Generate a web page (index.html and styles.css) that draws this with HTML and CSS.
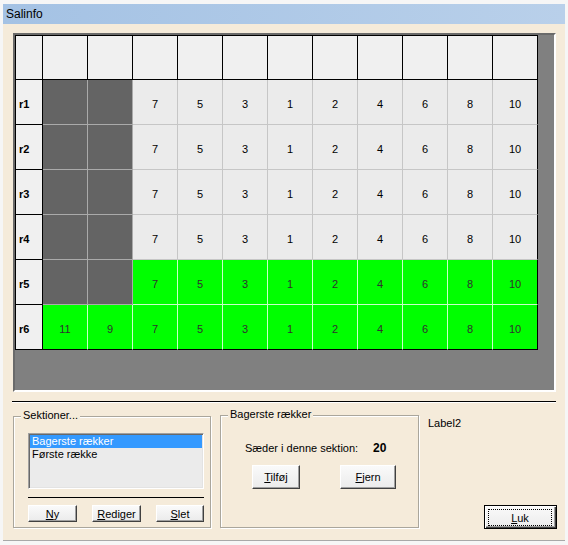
FILE: index.html
```html
<!DOCTYPE html>
<html lang="da">
<head>
<meta charset="utf-8">
<title>Salinfo</title>
<link rel="stylesheet" href="styles.css">
</head>
<body>
<div class="window">
  <div class="titlebar">Salinfo</div>
  <div class="client">
    <div class="panel">
      <div class="grid">
        <div class="c fx"></div><div class="c fx"></div><div class="c fx"></div><div class="c fx"></div><div class="c fx"></div><div class="c fx"></div><div class="c fx"></div><div class="c fx"></div><div class="c fx"></div><div class="c fx"></div><div class="c fx"></div><div class="c fx"></div>

        <div class="c fx rl">r1</div><div class="c dk"></div><div class="c dk"></div><div class="c lt">7</div><div class="c lt">5</div><div class="c lt">3</div><div class="c lt">1</div><div class="c lt">2</div><div class="c lt">4</div><div class="c lt">6</div><div class="c lt">8</div><div class="c lt er">10</div>

        <div class="c fx rl">r2</div><div class="c dk"></div><div class="c dk"></div><div class="c lt">7</div><div class="c lt">5</div><div class="c lt">3</div><div class="c lt">1</div><div class="c lt">2</div><div class="c lt">4</div><div class="c lt">6</div><div class="c lt">8</div><div class="c lt er">10</div>

        <div class="c fx rl">r3</div><div class="c dk"></div><div class="c dk"></div><div class="c lt">7</div><div class="c lt">5</div><div class="c lt">3</div><div class="c lt">1</div><div class="c lt">2</div><div class="c lt">4</div><div class="c lt">6</div><div class="c lt">8</div><div class="c lt er">10</div>

        <div class="c fx rl">r4</div><div class="c dk"></div><div class="c dk"></div><div class="c lt">7</div><div class="c lt">5</div><div class="c lt">3</div><div class="c lt">1</div><div class="c lt">2</div><div class="c lt">4</div><div class="c lt">6</div><div class="c lt">8</div><div class="c lt er">10</div>

        <div class="c fx rl">r5</div><div class="c dk"></div><div class="c dk"></div><div class="c gr">7</div><div class="c gr">5</div><div class="c gr">3</div><div class="c gr">1</div><div class="c gr">2</div><div class="c gr">4</div><div class="c gr">6</div><div class="c gr">8</div><div class="c gr er">10</div>

        <div class="c fx rl eb">r6</div><div class="c gr eb">11</div><div class="c gr eb">9</div><div class="c gr eb">7</div><div class="c gr eb">5</div><div class="c gr eb">3</div><div class="c gr eb">1</div><div class="c gr eb">2</div><div class="c gr eb">4</div><div class="c gr eb">6</div><div class="c gr eb">8</div><div class="c gr eb er">10</div>
      </div>
    </div>

    <div class="sep"></div>

    <div class="bottom">
      <div class="group g1">
        <span class="legend">Sektioner...</span>
        <div class="list">
          <div class="item sel">Bagerste rækker</div>
          <div class="item">Første række</div>
        </div>
        <div class="hline"></div>
        <div class="btnrow">
          <button class="btn small w49"><span><u>N</u>y</span></button>
          <button class="btn small w49"><span><u>R</u>ediger</span></button>
          <button class="btn small w48"><span><u>S</u>let</span></button>
        </div>
      </div>

      <div class="group g2">
        <span class="legend">Bagerste rækker</span>
        <div class="info">
          <span class="info-label">Sæder i denne sektion:</span>
          <span class="count">20</span>
        </div>
        <div class="g2btns">
          <button class="btn tall w48"><span><u>T</u>ilføj</span></button>
          <button class="btn tall w56 fjern"><span><u>F</u>jern</span></button>
        </div>
      </div>

      <div class="side">
        <div class="label2">Label2</div>
        <button class="btn luk"><span class="focus"><u>L</u>uk</span></button>
      </div>
    </div>
  </div>
</div>
</body>
</html>
```

FILE: styles.css
```css
html, body {
  margin: 0;
  padding: 0;
}

body {
  width: 568px;
  height: 545px;
  overflow: hidden;
  background: #f6f6f6;
  font-family: "Liberation Sans", Arial, sans-serif;
  font-size: 11px;
  color: #000;
}

.window {
  margin: 4px 0 0 3px;
  width: 562px;
  height: 537px;
  box-sizing: border-box;
  background: #f5ebda;
  border-bottom: 1px solid #a8a8a8;
}

.titlebar {
  height: 20px;
  line-height: 20px;
  padding-left: 3px;
  font-size: 12px;
  background: linear-gradient(to right, #a4c2e4, #b9d0ea);
}

.client {
  padding: 9px 0 0 10px;
}

.panel {
  width: 543px;
  height: 359px;
  box-sizing: border-box;
  border: 2px solid;
  border-color: #6a6a6a #ffffff #ffffff #6a6a6a;
  background: #808080;
}

.grid {
  display: grid;
  grid-template-columns: 27px repeat(11, 45px);
  grid-template-rows: 44px repeat(6, 45px);
  width: max-content;
  border-left: 1px solid #000;
  border-top: 1px solid #000;
}

.c {
  box-sizing: border-box;
  border-right: 1px solid;
  border-bottom: 1px solid;
  padding-top: 3px;
  display: flex;
  align-items: center;
  justify-content: center;
  font-size: 11px;
}

.fx {
  background: #f0f0f0;
  border-color: #000;
}

.rl {
  justify-content: flex-start;
  padding-left: 3px;
  font-weight: bold;
}

.lt {
  background: #ebebeb;
  border-color: #c6c6c6;
}

.dk {
  background: #646464;
  border-color: #aaaaaa;
}

.gr {
  background: #00ff00;
  border-color: #c8ffc8;
  color: #303030;
}

.er {
  border-right-color: #000;
}

.eb {
  border-bottom-color: #000;
}

.sep {
  margin: 9px 0 0 -1px;
  width: 544px;
  height: 0;
  border-top: 1px solid #000;
  border-bottom: 1px solid #fff;
}

.bottom {
  display: flex;
  align-items: flex-start;
}

.group {
  position: relative;
  box-sizing: border-box;
  border: 1px solid #aaa69c;
  box-shadow: inset 1px 1px #fff, 1px 1px #fff;
}

.legend {
  position: absolute;
  top: -8px;
  left: 7px;
  padding: 0 2px;
  line-height: 13px;
  background: #f5ebda;
}

.g1 {
  margin-top: 13px;
  width: 198px;
  height: 112px;
  padding: 16px 0 0 14px;
}

.g2 {
  margin: 12px 0 0 9px;
  width: 199px;
  height: 113px;
}

.list {
  width: 176px;
  height: 56px;
  box-sizing: border-box;
  border: 1px solid;
  border-color: #a0a0a0 #ffffff #ffffff #a0a0a0;
  box-shadow: inset 1px 1px #696969, inset -1px -1px #e3e3e3;
  background: #ebebeb;
  padding: 1px;
}

.item {
  height: 13px;
  line-height: 13px;
  padding-left: 2px;
  white-space: nowrap;
}

.sel {
  background: #3399ff;
  color: #fff;
}

.hline {
  margin-top: 8px;
  width: 176px;
  border-top: 1px solid #000;
}

.btnrow {
  display: flex;
  gap: 15px;
  margin-top: 7px;
}

.btn {
  box-sizing: border-box;
  margin: 0;
  padding: 0;
  display: flex;
  align-items: center;
  justify-content: center;
  font-family: inherit;
  font-size: 11px;
  color: #000;
  border: 1px solid;
  border-color: #ffffff #404040 #404040 #ffffff;
  box-shadow: inset -1px -1px #a0a0a0;
  background: linear-gradient(#fafafa, #ebebeb);
  cursor: default;
}

.small { height: 17px; }
.tall { height: 24px; }
.w48 { width: 48px; }
.w49 { width: 49px; }
.w56 { width: 56px; }

.info {
  display: flex;
  align-items: center;
  margin: 26px 0 0 24px;
  line-height: 13px;
}

.info-label {
  width: 128px;
}

.count {
  font-weight: bold;
  font-size: 12px;
}

.g2btns {
  display: flex;
  margin: 10px 0 0 31px;
}

.fjern {
  margin-left: 40px;
}

.side {
  margin-left: 9px;
  width: 129px;
  height: 126px;
  display: flex;
  flex-direction: column;
}

.label2 {
  margin-top: 14px;
  line-height: 13px;
}

.luk {
  margin-top: auto;
  align-self: flex-end;
  width: 73px;
  height: 24px;
  padding: 3px 4px 2px 3px;
  border: 1px solid #000;
  box-shadow: inset 1px 1px #fff, inset -1px -1px #404040, inset -2px -2px #a0a0a0;
  align-items: stretch;
}

.focus {
  flex: 1;
  display: flex;
  align-items: center;
  justify-content: center;
  border: 1px dotted #000;
}
```
